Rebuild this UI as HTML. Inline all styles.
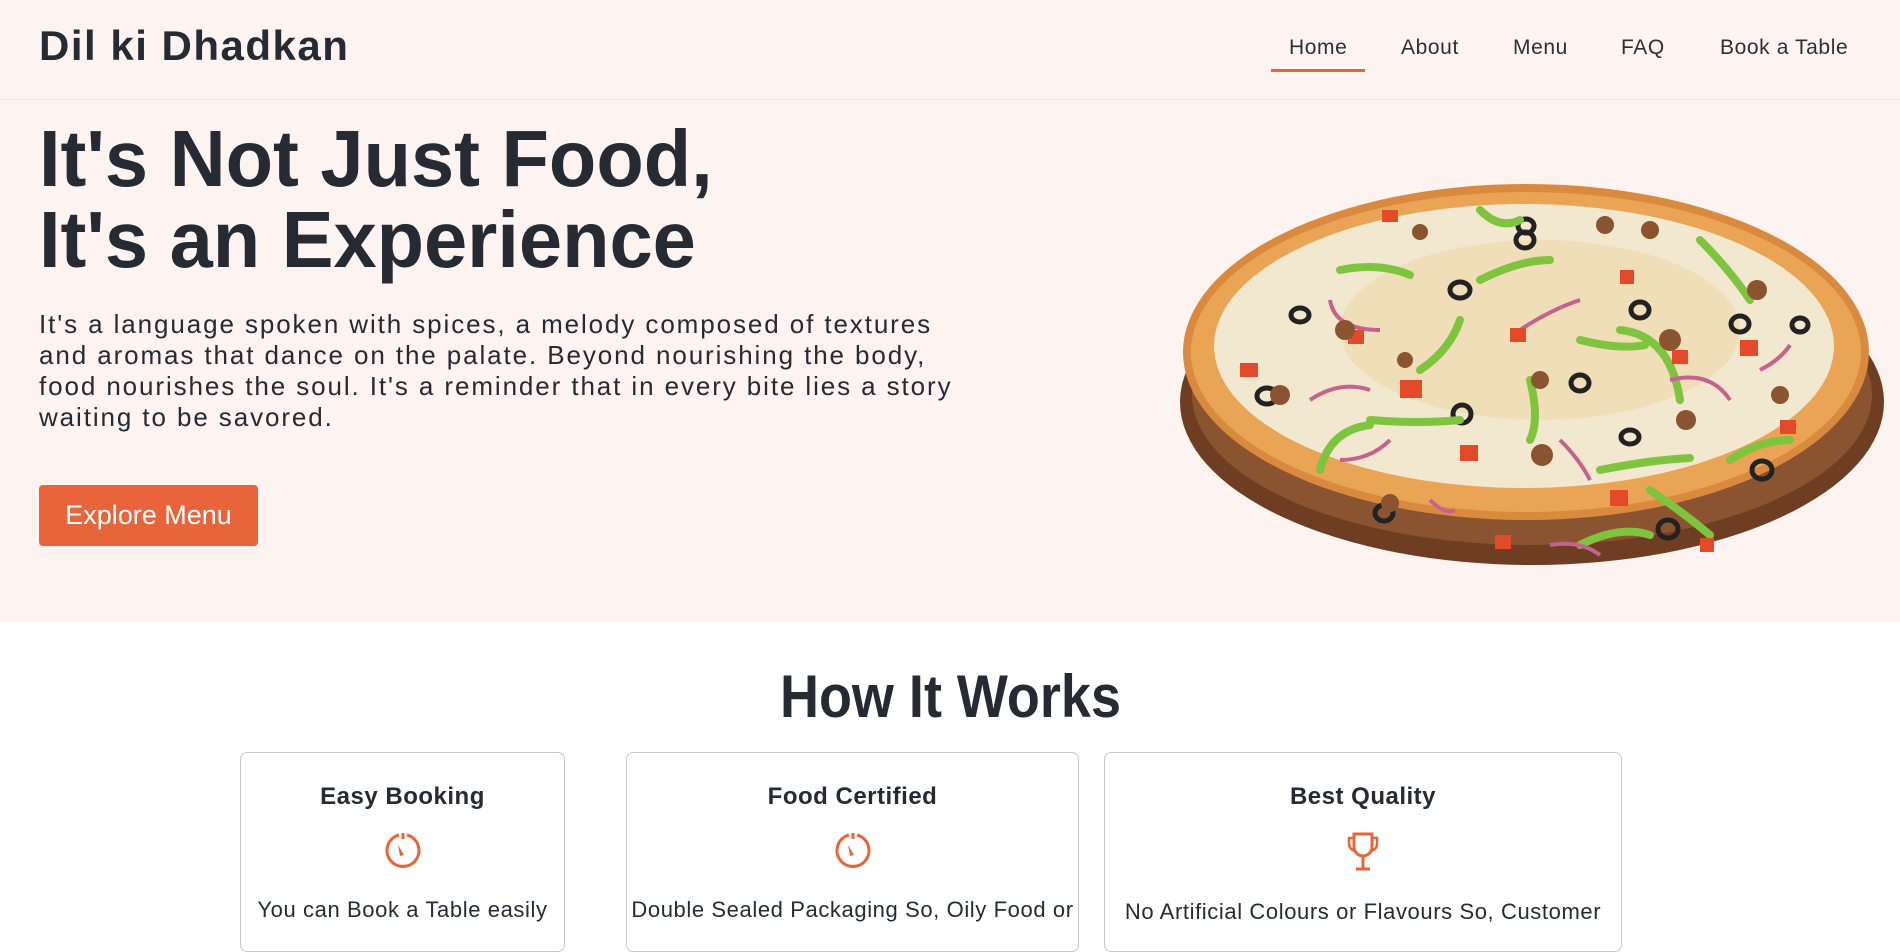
<!DOCTYPE html>
<html><head><meta charset="utf-8"><style>
*{margin:0;padding:0;box-sizing:border-box}
body{width:1900px;height:911px;overflow:hidden;background:#fff;font-family:"Liberation Sans",sans-serif;color:#262a33}
.hero{position:absolute;left:0;top:0;width:1900px;height:622px;background:#fdf4f2}
.nav{position:absolute;left:0;top:0;width:1900px;height:100px;border-bottom:1px solid #f0e6e4}
.logo{position:absolute;left:39px;top:22px;font-size:42px;font-weight:bold;letter-spacing:1.5px;color:#262a33}
.nav a{position:absolute;top:36px;font-size:21px;letter-spacing:.6px;color:#2b2f38;text-decoration:none}
.ul{position:absolute;left:1271px;top:69px;width:94px;height:3px;background:#e8643a}
h1{position:absolute;left:39px;top:118px;font-size:80px;line-height:81px;font-weight:bold;transform:scaleX(.97);transform-origin:left top;white-space:nowrap}
.p{position:absolute;left:39px;top:309px;font-size:26px;line-height:31px;letter-spacing:1.9px;color:#262a33;white-space:nowrap}
.btn{position:absolute;left:39px;top:485px;width:219px;height:61px;background:#e8643a;border-radius:4px;color:#fff;font-size:27px;line-height:61px;text-align:center}
h2{position:absolute;left:0;width:1900px;top:662px;text-align:center;font-size:60px;font-weight:bold}
h2 span{display:inline-block;transform:scaleX(.9)}
.card{position:absolute;top:752px;height:200px;border:1px solid #c8c8c8;border-radius:7px;text-align:center}
.card h3{margin-top:30px;font-size:24px;font-weight:bold;letter-spacing:.5px}
.card svg{display:block;margin:20px auto 0}
.card p{margin-top:26px;font-size:22px;letter-spacing:.6px;white-space:nowrap}
</style></head><body>
<div class="hero"></div>
<div class="nav">
<div class="logo">Dil ki Dhadkan</div>
<a style="left:1289px">Home</a><a style="left:1401px">About</a><a style="left:1513px">Menu</a><a style="left:1621px">FAQ</a><a style="left:1720px">Book a Table</a>
<div class="ul"></div>
</div>
<h1>It's Not Just Food,<br>It's an Experience</h1>
<div class="p">It's a language spoken with spices, a melody composed of textures<br>and aromas that dance on the palate. Beyond nourishing the body,<br>food nourishes the soul. It's a reminder that in every bite lies a story<br>waiting to be savored.</div>
<div class="btn">Explore Menu</div>

<svg style="position:absolute;left:1170px;top:175px" width="730" height="400" viewBox="1170 175 730 400">
<ellipse cx="1532" cy="402" rx="352" ry="163" fill="#6e3d22"/>
<ellipse cx="1532" cy="395" rx="340" ry="150" fill="#8a5430"/>
<ellipse cx="1526" cy="352" rx="343" ry="168" fill="#d98a3e"/>
<ellipse cx="1526" cy="352" rx="335" ry="160" fill="#e9a455"/>
<ellipse cx="1524" cy="346" rx="310" ry="142" fill="#f2e7cf"/>
<ellipse cx="1540" cy="330" rx="200" ry="90" fill="#efd9a8" opacity=".6"/>
<g fill="none" stroke="#222" stroke-width="5">
<ellipse cx="1300" cy="315" rx="9" ry="7"/><ellipse cx="1525" cy="240" rx="9" ry="8"/><ellipse cx="1462" cy="414" rx="9" ry="9"/><ellipse cx="1640" cy="310" rx="9" ry="8"/><ellipse cx="1762" cy="470" rx="10" ry="9"/><ellipse cx="1460" cy="290" rx="10" ry="8"/><ellipse cx="1384" cy="513" rx="9" ry="8"/><ellipse cx="1668" cy="529" rx="10" ry="9"/><ellipse cx="1267" cy="396" rx="10" ry="8"/><ellipse cx="1630" cy="437" rx="9" ry="7"/><ellipse cx="1740" cy="324" rx="9" ry="8"/><ellipse cx="1580" cy="383" rx="9" ry="8"/><ellipse cx="1526" cy="226" rx="8" ry="7"/><ellipse cx="1800" cy="325" rx="8" ry="7"/>
</g>
<g stroke="#7fc43e" stroke-width="8" stroke-linecap="round" fill="none">
<path d="M1340 270 q40 -8 70 5"/><path d="M1480 280 q40 -20 70 -20"/><path d="M1420 370 q30 -20 40 -50"/><path d="M1370 420 q50 4 90 0"/><path d="M1320 470 q10 -40 50 -45"/><path d="M1530 380 q10 40 0 60"/><path d="M1600 470 q50 -10 90 -12"/><path d="M1650 490 q30 20 60 45"/><path d="M1700 240 q30 30 50 60"/><path d="M1730 460 q30 -20 60 -20"/><path d="M1580 340 q40 10 65 5"/><path d="M1620 330 q50 5 60 70"/><path d="M1580 545 q40 -20 70 -10"/><path d="M1480 210 q20 20 40 10"/>
</g>
<g stroke="#c66290" stroke-width="4" fill="none">
<path d="M1330 300 q5 30 50 30"/><path d="M1310 400 q30 -20 60 -10"/><path d="M1390 440 q-20 20 -50 20"/><path d="M1520 330 q30 -20 60 -30"/><path d="M1670 380 q40 -10 60 20"/><path d="M1760 370 q20 -10 30 -25"/><path d="M1560 440 q20 20 30 40"/><path d="M1430 500 q15 15 25 10"/><path d="M1600 555 q-20 -15 -50 -10"/>
</g>
<g fill="#e24a2a">
<rect x="1240" y="363" width="18" height="14"/><rect x="1348" y="330" width="16" height="14"/><rect x="1400" y="380" width="22" height="18"/><rect x="1510" y="328" width="16" height="14"/><rect x="1620" y="270" width="14" height="14"/><rect x="1740" y="340" width="18" height="16"/><rect x="1780" y="420" width="16" height="14"/><rect x="1460" y="445" width="18" height="16"/><rect x="1610" y="490" width="18" height="16"/><rect x="1495" y="535" width="16" height="14"/><rect x="1700" y="538" width="14" height="14"/><rect x="1382" y="210" width="16" height="12"/><rect x="1672" y="350" width="16" height="14"/>
</g>
<g fill="#8a5430">
<circle cx="1280" cy="395" r="10"/><circle cx="1345" cy="330" r="10"/><circle cx="1405" cy="360" r="8"/><circle cx="1542" cy="455" r="11"/><circle cx="1670" cy="340" r="11"/><circle cx="1650" cy="230" r="9"/><circle cx="1605" cy="225" r="9"/><circle cx="1757" cy="290" r="10"/><circle cx="1780" cy="395" r="9"/><circle cx="1686" cy="420" r="10"/><circle cx="1720" cy="500" r="9"/><circle cx="1565" cy="530" r="10"/><circle cx="1390" cy="503" r="9"/><circle cx="1540" cy="380" r="9"/><circle cx="1420" cy="232" r="8"/>
</g>
</svg>

<h2><span>How It Works</span></h2>
<div class="card" style="left:240px;width:325px"><h3>Easy Booking</h3>
<svg width="38" height="40" viewBox="0 0 38 40"><path d="M15 4 A16 16 0 1 0 23 4" fill="none" stroke="#e8643a" stroke-width="3"/><path d="M19 2 v6" stroke="#e8643a" stroke-width="3"/><path d="M14 14 L20 24 L16 25 Z" fill="#e8643a"/></svg>
<p>You can Book a Table easily</p></div>
<div class="card" style="left:626px;width:453px"><h3>Food Certified</h3>
<svg width="38" height="40" viewBox="0 0 38 40"><path d="M15 4 A16 16 0 1 0 23 4" fill="none" stroke="#e8643a" stroke-width="3"/><path d="M19 2 v6" stroke="#e8643a" stroke-width="3"/><path d="M14 14 L20 24 L16 25 Z" fill="#e8643a"/></svg>
<p>Double Sealed Packaging So, Oily Food or</p></div>
<div class="card" style="left:1104px;width:518px"><h3>Best Quality</h3>
<svg width="38" height="42" viewBox="0 0 38 42"><path d="M10 3 H28 V16 A9 9 0 0 1 10 16 Z" fill="none" stroke="#e8643a" stroke-width="3"/><path d="M10 7 H5 V13 Q5 18 11 20 M28 7 H33 V13 Q33 18 27 20" fill="none" stroke="#e8643a" stroke-width="2.5"/><path d="M19 25 V37 M12 38 H26" stroke="#e8643a" stroke-width="3"/></svg>
<p>No Artificial Colours or Flavours So, Customer</p></div>
</body></html>
